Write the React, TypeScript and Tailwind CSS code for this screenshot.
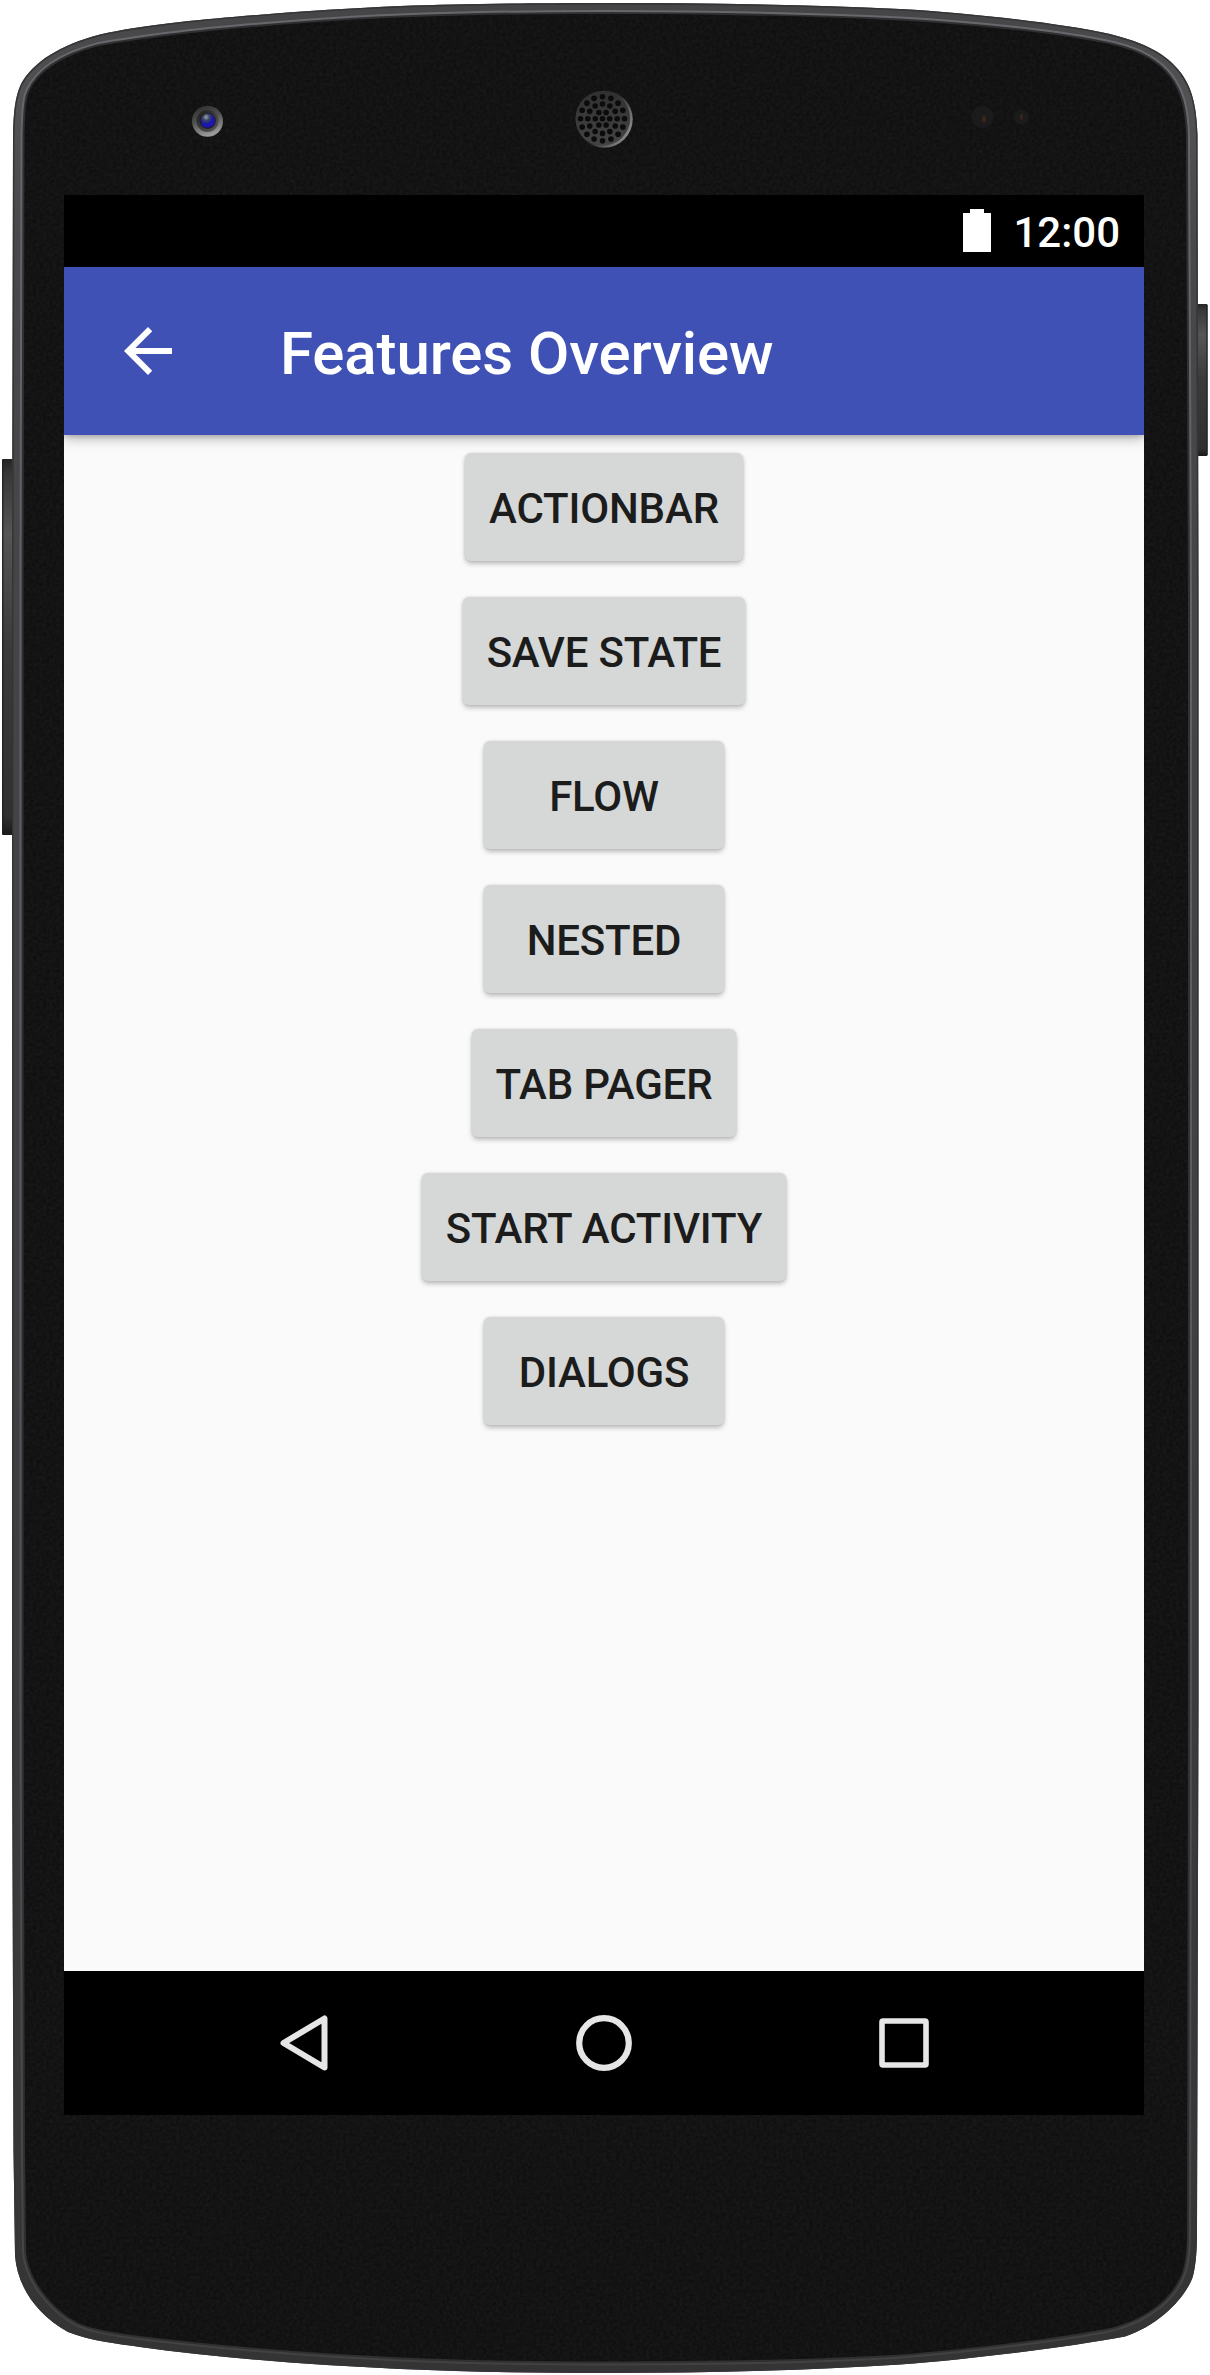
import React from "react";

const FEATURES = ["ACTIONBAR", "SAVE STATE", "FLOW", "NESTED", "TAB PAGER", "START ACTIVITY", "DIALOGS"];

const SHELL =
  "M605 3 C520 3 460 4 400 6 C330 9 240 15.5 180 22 C145 26 120 30 100 34.5 C60 45 33 62 21 84 C15 97 13.5 112 13 135 L12 600 L12 1700 L13.5 2150 L15 2255 C17 2284 34 2313 68 2332 C90 2341 120 2344 140 2347 C220 2358 310 2365 400 2369 C470 2372 540 2373 605 2373 C700 2373 800 2371 900 2364.5 C970 2359 1070 2347 1125 2336.5 C1160 2325 1186 2297 1193 2276 C1196 2264 1197 2250 1197 2230 L1198.5 1700 L1198.5 600 L1197.5 135 C1196.5 105 1192 88 1181 73 C1166 53 1145 43 1110 34 C1060 23 970 13 900 9 C800 4.5 700 3 605 3 Z";

const GLASS =
  "M605 14 C520 14 460 15 400 17.5 C340 19.5 230 28 170 35.5 C135 40 115 43 97 46.5 C58 57 37 74 29 92 C25.5 100 25 115 24.5 135 L23.5 600 L23.5 1700 L25 2150 L26 2250 C27 2277 50 2308 78 2323 C95 2330 112 2332 135 2335.5 C220 2346 310 2353 400 2357.5 C470 2360.5 540 2361.5 605 2361.5 C700 2361.5 810 2360 900 2354.5 C970 2349 1060 2338 1113 2327.5 C1150 2317 1175 2296 1183 2270 C1186 2260 1187 2250 1187 2230 L1188 1700 L1188 600 L1186 135 C1185 108 1181 92 1169 76 C1158 62 1142 52 1113 45 C1060 33 970 24.5 900 20.5 C800 15.5 700 14 605 14 Z";

const SPEAKER_RINGS = [
  { count: 1, radius: 0 },
  { count: 6, radius: 7.2 },
  { count: 12, radius: 14.7 },
  { count: 16, radius: 22 },
];

function DeviceShell() {
  return (
    <svg className="pointer-events-none absolute inset-0" width="1210" height="2375" viewBox="0 0 1210 2375" aria-hidden="true">
      <defs>
        <linearGradient id="rim" x1="0" y1="0" x2="0" y2="1">
          <stop offset="0" stopColor="#444446" />
          <stop offset="0.04" stopColor="#525154" />
          <stop offset="0.1" stopColor="#48474a" />
          <stop offset="0.55" stopColor="#403f42" />
          <stop offset="1" stopColor="#343435" />
        </linearGradient>
        <linearGradient id="key" x1="0" y1="0" x2="0" y2="1">
          <stop offset="0" stopColor="#252525" />
          <stop offset="0.04" stopColor="#383838" />
          <stop offset="0.2" stopColor="#555" />
          <stop offset="0.5" stopColor="#3a3a3a" />
          <stop offset="0.95" stopColor="#303030" />
          <stop offset="1" stopColor="#191919" />
        </linearGradient>
        <linearGradient id="glint" x1="0" y1="0" x2="0" y2="1">
          <stop offset="0" stopColor="#68676b" />
          <stop offset="0.5" stopColor="#5c5b60" />
          <stop offset="0.9" stopColor="#48484a" />
          <stop offset="1" stopColor="#424243" />
        </linearGradient>
        <linearGradient id="lens" x1="0" y1="0" x2="0.35" y2="1">
          <stop offset="0" stopColor="#292929" />
          <stop offset="0.5" stopColor="#505050" />
          <stop offset="1" stopColor="#989898" />
        </linearGradient>
        <linearGradient id="lensInner" x1="0" y1="0" x2="1" y2="1">
          <stop offset="0" stopColor="#1d1d1d" />
          <stop offset="1" stopColor="#5a5a5a" />
        </linearGradient>
        <radialGradient id="iris" cx="0.38" cy="0.25" r="0.75">
          <stop offset="0" stopColor="#93a9b0" />
          <stop offset="0.3" stopColor="#3e4964" />
          <stop offset="0.6" stopColor="#1b1b9c" />
          <stop offset="0.9" stopColor="#1a12c4" />
          <stop offset="1" stopColor="#22194a" />
        </radialGradient>
        <linearGradient id="speakerEdge" x1="0" y1="0" x2="1" y2="0.6">
          <stop offset="0" stopColor="#262626" />
          <stop offset="0.6" stopColor="#303030" />
          <stop offset="1" stopColor="#858585" />
        </linearGradient>
        <linearGradient id="speakerFace" x1="0" y1="0" x2="0" y2="1">
          <stop offset="0" stopColor="#303030" />
          <stop offset="1" stopColor="#444" />
        </linearGradient>
        <filter id="grain" x="0" y="0" width="100%" height="100%" colorInterpolationFilters="sRGB">
          <feTurbulence type="fractalNoise" baseFrequency="0.3" numOctaves="2" seed="4" />
          <feColorMatrix values="0.06 0 0 0 0.046  0.06 0 0 0 0.046  0.06 0 0 0 0.046  0 0 0 0 1" />
          <feComposite in2="SourceGraphic" operator="in" />
        </filter>
        <clipPath id="shellClip">
          <path d={SHELL} />
        </clipPath>
      </defs>

      <rect x="2" y="459" width="14" height="376" rx="1" fill="url(#key)" />
      <path d="M2.8 460V834" stroke="#202020" strokeWidth="1.2" />
      <rect x="1194" y="304" width="13.5" height="152" rx="1" fill="url(#key)" />
      <path d="M1207 305V455" stroke="#202020" strokeWidth="1.2" />

      <path d={SHELL} fill="url(#rim)" />
      <g clipPath="url(#shellClip)">
        <path d={SHELL} fill="none" stroke="#353436" strokeWidth="3" />
        <path d={GLASS} fill="none" stroke="url(#glint)" strokeWidth="8" />
        <path d={GLASS} fill="none" stroke="#303033" strokeWidth="4" />
      </g>
      <path d={GLASS} fill="#131313" filter="url(#grain)" />

      <circle cx="207.5" cy="121.3" r="15.5" fill="url(#lens)" />
      <circle cx="207.5" cy="121" r="11" fill="url(#lensInner)" />
      <circle cx="207.7" cy="120.8" r="8.2" fill="#202020" />
      <circle cx="207.9" cy="120.8" r="7.2" fill="url(#iris)" />

      <circle cx="604.2" cy="119.2" r="28.5" fill="url(#speakerEdge)" />
      <circle cx="602.8" cy="118.4" r="27.3" fill="url(#speakerFace)" />
      {SPEAKER_RINGS.map((ring) =>
        Array.from({ length: ring.count }, (_, i) => {
          const a = (i * 2 * Math.PI) / ring.count;
          return (
            <circle
              key={`${ring.count}-${i}`}
              cx={602.5 + ring.radius * Math.cos(a)}
              cy={118.7 + ring.radius * Math.sin(a)}
              r="2.8"
              fill="#0b0b0b"
            />
          );
        })
      )}

      <circle cx="982.5" cy="117" r="11" fill="#1b1b1b" />
      <ellipse cx="984" cy="119" rx="2" ry="3.5" fill="#38241a" />
      <circle cx="1021.5" cy="117" r="7.5" fill="#1b1b1b" />
      <ellipse cx="1021.5" cy="117" rx="1.6" ry="3" fill="#38241a" />
    </svg>
  );
}

function StatusBar() {
  return (
    <div className="flex h-[72px] shrink-0 items-center justify-end bg-black pr-[24px] text-white">
      <svg className="mr-[22px] -mt-[1px]" width="28" height="43" viewBox="0 0 28 43" fill="currentColor" aria-hidden="true">
        <path d="M7 0H21V4H28V43H0V4H7Z" />
      </svg>
      <span className="pt-[3px] text-[42px] leading-[50px] font-medium">12:00</span>
    </div>
  );
}

function AppBar() {
  return (
    <header className="relative z-10 flex h-[168px] shrink-0 items-center bg-[#3f51b5] pl-12 text-white shadow-[0_3px_12px_rgba(0,0,0,0.3),0_2px_4px_rgba(0,0,0,0.12)] [clip-path:inset(0_0_-24px_0)]">
      <button aria-label="Back" className="size-[72px]">
        <svg width="72" height="72" viewBox="0 0 24 24" fill="currentColor">
          <path d="M20 11H7.83l5.59-5.59L12 4l-8 8 8 8 1.41-1.41L7.83 13H20v-2z" />
        </svg>
      </button>
      <h1 className="ml-24 pt-[5px] text-[60px] leading-[70px] font-medium tracking-[-0.1px]">Features Overview</h1>
    </header>
  );
}

function NavBar() {
  return (
    <nav className="flex h-36 shrink-0 items-center justify-center gap-[228px] bg-black text-[#e6e6e6]">
      <svg width="72" height="72" viewBox="0 0 72 72" fill="none" stroke="currentColor" strokeWidth="6" strokeLinejoin="round" aria-hidden="true">
        <path d="M56.5 11.5V60.5L15.5 36Z" />
      </svg>
      <svg width="72" height="72" viewBox="0 0 72 72" fill="none" stroke="currentColor" strokeWidth="6.2" aria-hidden="true">
        <circle cx="36" cy="36" r="24.8" />
      </svg>
      <svg width="72" height="72" viewBox="0 0 72 72" fill="none" stroke="currentColor" strokeWidth="5.6" aria-hidden="true">
        <rect x="14" y="14" width="44" height="44" rx="1" />
      </svg>
    </nav>
  );
}

export default function App() {
  return (
    <div className="relative h-[2375px] w-[1210px] overflow-hidden bg-white pt-[195px] pl-16 font-[Roboto,sans-serif]">
      <DeviceShell />
      <div className="relative flex h-[1920px] w-[1080px] flex-col overflow-hidden bg-[#fafafa]">
        <StatusBar />
        <AppBar />
        <main className="flex flex-1 flex-col items-center gap-9 pt-[18px]">
          {FEATURES.map((name) => (
            <button
              key={name}
              className="h-[108px] min-w-60 rounded-[6px] bg-[#d6d8d7] px-6 pt-1 text-[42px] leading-[50px] font-medium tracking-[-0.18px] text-[#1c1c1c] shadow-[0_3px_5px_rgba(0,0,0,0.23),0_0_3px_rgba(0,0,0,0.12)]"
            >
              {name}
            </button>
          ))}
        </main>
        <NavBar />
      </div>
    </div>
  );
}
